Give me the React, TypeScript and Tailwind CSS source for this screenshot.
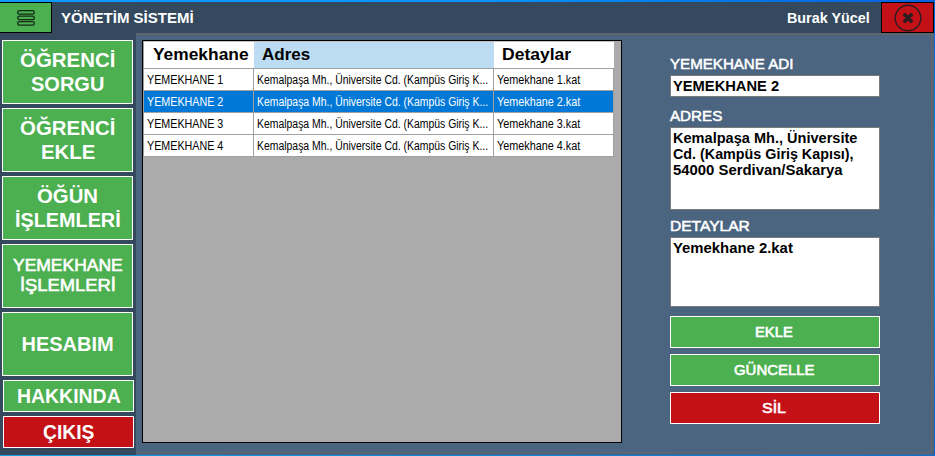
import { useLayoutEffect, useRef, useState } from "react";
import clsx from "clsx";

/** Single line of text squeezed or stretched to an exact width. */
function Fit({ text, w, className }: { text: string; w: number; className?: string }) {
  const ref = useRef<HTMLSpanElement>(null);
  const [scale, setScale] = useState(1);
  useLayoutEffect(() => {
    if (ref.current) setScale(w / ref.current.offsetWidth);
  }, [w, text]);
  return (
    <span className={clsx("block shrink-0 text-left whitespace-nowrap", className)} style={{ width: w }}>
      <span ref={ref} className="inline-block origin-left align-top" style={{ transform: `scaleX(${scale})` }}>
        {text}
      </span>
    </span>
  );
}

type Line = [string, number];

const menu: { lines: Line[]; box: string; font: string }[] = [
  { lines: [["ÖĞRENCİ", 95], ["SORGU", 73]], box: "h-16 bg-[#4caf50]", font: "text-[20px] leading-6 font-bold" },
  { lines: [["ÖĞRENCİ", 95], ["EKLE", 54]], box: "h-16 bg-[#4caf50]", font: "text-[20px] leading-6 font-bold" },
  { lines: [["ÖĞÜN", 61], ["İŞLEMLERİ", 106]], box: "h-16 bg-[#4caf50]", font: "text-[20px] leading-6 font-bold" },
  { lines: [["YEMEKHANE", 110], ["İŞLEMLERİ", 96]], box: "h-16 bg-[#4caf50]", font: "text-[17px] leading-5 [-webkit-text-stroke:0.6px_white]" },
  { lines: [["HESABIM", 92]], box: "h-16 bg-[#4caf50]", font: "text-[20px] leading-6 font-bold" },
  { lines: [["HAKKINDA", 104]], box: "h-8 ml-px bg-[#4caf50]", font: "text-[20px] leading-6 font-bold" },
  { lines: [["ÇIKIŞ", 51]], box: "h-8 ml-px bg-[#c41017]", font: "text-[20px] leading-6 font-bold" },
];

const rows = [1, 2, 3, 4];
const cols = "grid grid-cols-[110px_240px_120px]";
const cell = "border-r border-[#a0a0a0] pt-px pl-[3px]";

function Label({ text, w }: { text: string; w: number }) {
  return <Fit text={text} w={w} className="h-5 text-[14px] leading-5 text-white [-webkit-text-stroke:0.5px_white]" />;
}

function Action({ text, w, color }: { text: string; w: number; color: string }) {
  return (
    <button className={clsx("flex h-8 w-full items-center justify-center border border-white pr-[2px] text-[14px] leading-5 text-white [-webkit-text-stroke:0.6px_white]", color)}>
      <Fit text={text} w={w} />
    </button>
  );
}

export default function App() {
  return (
    <div className="flex h-[456px] w-[935px] flex-col overflow-hidden bg-[#34495e] font-['Liberation_Sans',Arial,sans-serif]">
      <div className="h-0.5 shrink-0 bg-linear-to-r from-[#0d9bfb] via-[#0a94fa] to-[#0860dc]" />
      <div className="flex min-h-0 flex-1">
        <div className="flex min-w-0 flex-1 flex-col">
          <header className="flex h-[31px] shrink-0 items-center">
            <button className="flex h-[31px] w-[52px] items-center border border-l-0 border-black bg-[#4caf50] pl-[17px]">
              <svg width="18" height="16" viewBox="0 0 18 16" fill="none" stroke="#122b14" strokeWidth="1.3">
                <rect x="0.7" y="0.7" width="16.6" height="3.4" rx="1.7" />
                <rect x="0.7" y="6.2" width="16.6" height="3.4" rx="1.7" />
                <rect x="0.7" y="11.7" width="16.6" height="3.4" rx="1.7" />
              </svg>
            </button>
            <Fit text="YÖNETİM SİSTEMİ" w={133} className="ml-[9px] text-[14px] leading-5 font-bold text-white" />
            <Fit text="Burak Yücel" w={83} className="mr-[11px] ml-auto text-[14px] leading-5 font-bold text-white" />
            <button className="flex h-[31px] w-[53px] items-center justify-center border border-black bg-[#c41017]">
              <svg width="28" height="28" viewBox="0 0 28 28" fill="none" stroke="#2b1d1f">
                <circle cx="14" cy="14" r="12.8" strokeWidth="1.4" />
                <path d="M9.8 9.8 18.2 18.2M18.2 9.8 9.8 18.2" strokeWidth="3.6" />
              </svg>
            </button>
          </header>
          <div className="flex min-h-0 flex-1">
            <nav className="flex w-[136px] shrink-0 flex-col gap-1 pt-[7px] pl-0.5">
              {menu.map((m, i) => (
                <button key={i} className={clsx("flex w-[131px] shrink-0 flex-col items-center justify-center border border-white text-white", m.box, m.font)}>
                  {m.lines.map(([t, w]) => (
                    <Fit key={t} text={t} w={w} />
                  ))}
                </button>
              ))}
            </nav>
            <div className="flex min-w-0 flex-1 bg-[#4b6580] pr-px pb-0.5">
              <main className="flex min-w-0 flex-1 border-t-2 border-r-2 border-b border-[#5f656b]">
                <div className="mt-[5px] ml-1.5 h-[403px] w-[480px] shrink-0 border border-black bg-[#ababab]">
                  <div className="w-[471px] border-l border-[#a0a0a0]">
                    <div className={clsx(cols, "h-7 border-t border-b border-t-[#c4c0c0] border-b-[#a0a0a0] bg-white text-[17px] leading-[26px] font-bold text-black")}>
                      <Fit text="Yemekhane" w={96} className="pl-[9px]" />
                      <div className="bg-[#bcdcf4]">
                        <Fit text="Adres" w={48} className="ml-2" />
                      </div>
                      <Fit text="Detaylar" w={69} className="ml-2" />
                    </div>
                    {rows.map((n) => (
                      <div
                        key={n}
                        className={clsx(
                          cols,
                          "h-[22px] border-b border-[#a0a0a0] text-[12px] leading-5",
                          n === 2 ? "bg-[#0078d7] text-white" : "bg-white text-black",
                        )}
                      >
                        <div className={cell}>
                          <Fit text={`YEMEKHANE ${n}`} w={76} />
                        </div>
                        <div className={cell}>
                          <Fit text="Kemalpaşa Mh., Üniversite Cd. (Kampüs Giriş K..." w={231} />
                        </div>
                        <div className={cell}>
                          <Fit text={`Yemekhane ${n}.kat`} w={83} />
                        </div>
                      </div>
                    ))}
                  </div>
                </div>
                <form className="mt-[19px] ml-12 flex w-[210px] shrink-0 flex-col">
                  <Label text="YEMEKHANE ADI" w={123} />
                  <div className="mt-px flex h-[22px] items-center border border-[#7a7a7a] bg-white pl-[2px] text-[14px] leading-5 font-bold text-black">
                    <Fit text="YEMEKHANE 2" w={106} />
                  </div>
                  <div className="h-[9px]" />
                  <Label text="ADRES" w={52} />
                  <div className="mt-px h-[83px] border border-[#7a7a7a] bg-white pt-0.5 pl-[2px] text-[14px] leading-4 font-bold text-black">
                    <Fit text="Kemalpaşa Mh., Üniversite" w={184} />
                    <Fit text="Cd. (Kampüs Giriş Kapısı)," w={181} />
                    <Fit text="54000 Serdivan/Sakarya" w={170} />
                  </div>
                  <div className="h-1.5" />
                  <Label text="DETAYLAR" w={80} />
                  <div className="mt-px h-[70px] border border-[#7a7a7a] bg-white pt-0.5 pl-[2px] text-[14px] leading-4 font-bold text-black">
                    <Fit text="Yemekhane 2.kat" w={120} />
                  </div>
                  <div className="mt-[9px] flex flex-col gap-1.5">
                    <Action text="EKLE" w={38} color="bg-[#4caf50]" />
                    <Action text="GÜNCELLE" w={80} color="bg-[#4caf50]" />
                    <Action text="SİL" w={24} color="bg-[#c41017]" />
                  </div>
                </form>
              </main>
            </div>
          </div>
        </div>
        <div className="w-px shrink-0 bg-linear-to-b from-[#0a60dc] via-[#1590e8] to-[#0a60d0]" />
      </div>
      <div className="h-px shrink-0 bg-linear-to-r from-[#1a9de0] to-[#0a70d8]" />
    </div>
  );
}
